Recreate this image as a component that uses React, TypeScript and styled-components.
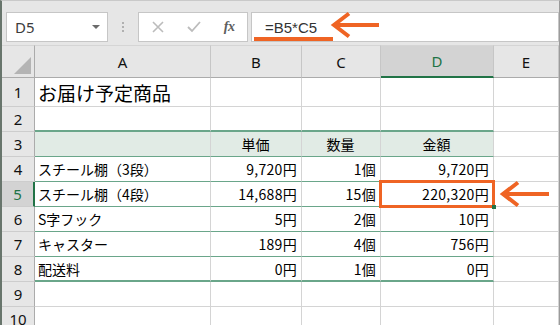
import styled, { createGlobalStyle, css } from 'styled-components';

const GREEN = '#217346';
const TABLE = '#6aa68a';
const ORANGE = '#ef6424';
const GRID = '#d4d4d4';

const GlobalStyle = createGlobalStyle`
  html, body {
    margin: 0;
    padding: 0;
    background: #e6e6e6;
  }
  body {
    font-family: "Noto Sans", "Noto Sans CJK JP", sans-serif;
  }
`;

const Window = styled.div`
  position: relative;
  width: 560px;
  height: 325px;
  box-sizing: border-box;
  overflow: hidden;
  background: #e6e6e6;
  border-left: 2px solid #68756c;
  border-top: 1px solid #c9c9c9;
  border-right: 1px solid #9b9b9b;
`;

const Toolbar = styled.div`
  display: flex;
  align-items: stretch;
  height: 44px;
  padding: 11px 0 3px 4px;
  box-sizing: border-box;
`;

const Field = styled.div`
  position: relative;
  display: flex;
  align-items: center;
  box-sizing: border-box;
  background: #fff;
  border: 1px solid #c6c6c6;
`;

const NameBox = styled(Field)`
  width: 102px;
  padding: 0 7px 0 8px;
  justify-content: space-between;
  font-size: 15px;
  color: #3c3c3c;
`;

const DropArrow = styled.span`
  width: 0;
  height: 0;
  border-left: 4px solid transparent;
  border-right: 4px solid transparent;
  border-top: 4px solid #6b6b6b;
`;

const Grip = styled.div`
  width: 30px;
  display: flex;
  flex-direction: column;
  align-items: center;
  justify-content: center;
  gap: 2px;

  span {
    width: 2px;
    height: 2px;
    background: #b0b0b0;
  }
`;

const FuncBox = styled(Field)`
  width: 110px;
  padding-left: 1px;
`;

const FuncButton = styled.div`
  width: 36px;
  display: flex;
  align-items: center;
  justify-content: center;
  color: #5e5e5e;
  font-family: "Liberation Serif", serif;
  font-style: italic;
  font-weight: bold;
  font-size: 14px;
  letter-spacing: -0.5px;
`;

const FormulaBox = styled(Field)`
  flex: 1;
  margin-left: 3px;
  padding-left: 13px;
  font-family: "Liberation Sans", sans-serif;
  font-size: 15px;
  color: #333;
`;

const Underline = styled.span`
  position: absolute;
  left: 2px;
  bottom: 0;
  width: 79px;
  height: 4px;
  background: ${ORANGE};
`;

const Sheet = styled.div`
  display: grid;
  grid-template-columns: 33px 176px 91px 79px 113px 1fr;
  grid-template-rows: 33px 29px repeat(9, 25px);
  background: #fff;
`;

const Corner = styled.div`
  background: #e6e6e6;
  border-top: 1px solid #d5d5d5;
  border-right: 1px solid #ababab;
  border-bottom: 1px solid #ababab;
  display: flex;
  align-items: flex-end;
  justify-content: flex-end;
  padding: 0 3px 3px 0;

  span {
    width: 0;
    height: 0;
    border-left: 17px solid transparent;
    border-bottom: 17px solid #b4b4b4;
  }
`;

const ColHead = styled.div<{ $active?: boolean }>`
  display: flex;
  align-items: center;
  justify-content: center;
  font-size: 15px;
  color: #111;
  background: #e6e6e6;
  border-top: 1px solid #d5d5d5;
  border-right: 1px solid #c6c6c6;
  border-bottom: 1px solid #ababab;
  ${(p) =>
    p.$active &&
    css`
      background: #d3d3d3;
      color: ${GREEN};
      border-bottom: 2px solid ${GREEN};
    `}
`;

const RowHead = styled.div<{ $active?: boolean }>`
  display: flex;
  align-items: center;
  justify-content: center;
  font-size: 15px;
  color: #111;
  background: #e6e6e6;
  border-right: 1px solid #ababab;
  border-bottom: 1px solid #cdcdcd;
  ${(p) =>
    p.$active &&
    css`
      background: #d3d3d3;
      color: ${GREEN};
      border-right: 2px solid ${GREEN};
    `}
`;

type Rule = 'none' | 'thin' | 'thick';
type Align = 'left' | 'center' | 'right';

const Cell = styled.div<{ $align?: Align; $rule?: Rule; $fill?: boolean; $title?: boolean }>`
  position: relative;
  display: flex;
  align-items: center;
  justify-content: ${(p) => (p.$align === 'right' ? 'flex-end' : p.$align === 'center' ? 'center' : 'flex-start')};
  padding: 0 4px 0 3px;
  box-sizing: border-box;
  font-family: "Noto Sans CJK JP", sans-serif;
  font-size: ${(p) => (p.$title ? '19px' : '14px')};
  letter-spacing: ${(p) => (p.$align === 'right' ? '0.3px' : '0')};
  color: #000;
  white-space: nowrap;
  background: ${(p) => (p.$fill ? '#e1ebe5' : '#fff')};
  border-right: 1px solid ${GRID};
  border-bottom: ${(p) =>
    p.$rule === 'thick' ? `2px solid ${TABLE}` : p.$rule === 'thin' ? `1px solid ${TABLE}` : `1px solid ${GRID}`};
`;

const Selection = styled.span`
  position: absolute;
  z-index: 1;
  top: -2px;
  left: -2px;
  right: -2px;
  bottom: -2px;
  border: 3px solid ${ORANGE};
  pointer-events: none;

  &::after {
    content: '';
    position: absolute;
    right: -4px;
    bottom: -4px;
    width: 4px;
    height: 4px;
    background: ${GREEN};
  }
`;

const Overlay = styled.svg`
  position: absolute;
  left: -2px;
  top: -1px;
  pointer-events: none;
  z-index: 2;
`;

type Row = {
  cells: string[];
  rule?: Rule;
  fill?: boolean;
  title?: boolean;
  center?: boolean;
};

const rows: Row[] = [
  { cells: ['お届け予定商品', '', '', ''], title: true },
  { cells: ['', '', '', ''], rule: 'thick' },
  { cells: ['', '単価', '数量', '金額'], rule: 'thin', fill: true, center: true },
  { cells: ['スチール棚（3段）', '9,720円', '1個', '9,720円'], rule: 'thin' },
  { cells: ['スチール棚（4段）', '14,688円', '15個', '220,320円'], rule: 'thin' },
  { cells: ['S字フック', '5円', '2個', '10円'], rule: 'thin' },
  { cells: ['キャスター', '189円', '4個', '756円'], rule: 'thin' },
  { cells: ['配送料', '0円', '1個', '0円'], rule: 'thick' },
  { cells: ['', '', '', ''] },
  { cells: ['', '', '', ''] },
];

const columns = ['A', 'B', 'C', 'D', 'E'];

export default function App() {
  return (
    <>
      <GlobalStyle />
      <Window>
        <Toolbar>
          <NameBox>
            D5
            <DropArrow />
          </NameBox>
          <Grip>
            <span />
            <span />
            <span />
          </Grip>
          <FuncBox>
            <FuncButton>
              <svg width="12" height="12" viewBox="0 0 12 12">
                <path d="M1 1 L11 11 M11 1 L1 11" stroke="#bcbcbc" strokeWidth="1.6" />
              </svg>
            </FuncButton>
            <FuncButton>
              <svg width="14" height="12" viewBox="0 0 14 12">
                <path d="M1 6 L5 10 L13 1" stroke="#bcbcbc" strokeWidth="1.8" fill="none" />
              </svg>
            </FuncButton>
            <FuncButton>fx</FuncButton>
          </FuncBox>
          <FormulaBox>
            =B5*C5
            <Underline />
          </FormulaBox>
        </Toolbar>

        <Sheet>
          <Corner>
            <span />
          </Corner>
          {columns.map((c) => (
            <ColHead key={c} $active={c === 'D'}>
              {c}
            </ColHead>
          ))}
          {rows.map((row, i) => {
            const n = i + 1;
            return [
              <RowHead key={`h${n}`} $active={n === 5}>
                {n}
              </RowHead>,
              ...row.cells.map((text, j) => (
                <Cell
                  key={`${n}-${j}`}
                  $align={row.center && j > 0 ? 'center' : j > 0 ? 'right' : 'left'}
                  $rule={row.rule}
                  $fill={row.fill}
                  $title={row.title}
                >
                  {text}
                  {n === 5 && j === 3 && <Selection />}
                </Cell>
              )),
              <Cell key={`${n}-e`} />,
            ];
          })}
        </Sheet>

        <Overlay width="560" height="325" viewBox="0 0 560 325">
          <g stroke={ORANGE} strokeWidth="4" fill="none">
            <path d="M335 25 H379" />
            <path d="M349 13.5 L334 25 L349 36.5" />
            <path d="M505 194 H549" />
            <path d="M518 182.5 L503 194 L518 205.5" />
          </g>
        </Overlay>
      </Window>
    </>
  );
}
